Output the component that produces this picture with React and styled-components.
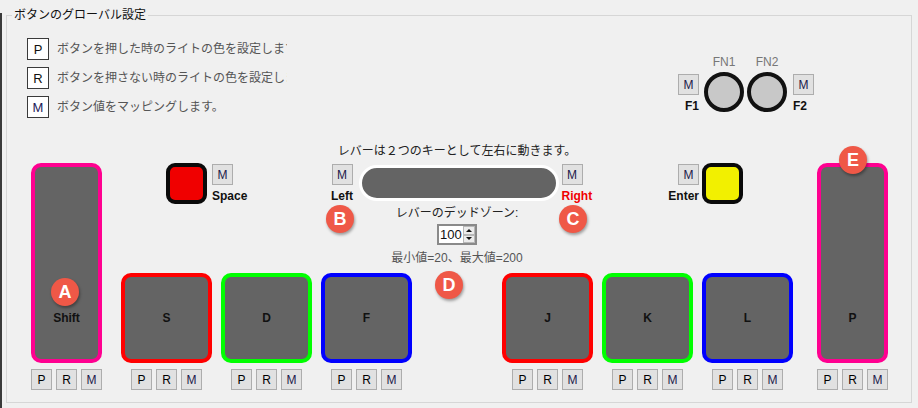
import styled, { createGlobalStyle } from 'styled-components';

const GlobalStyle = createGlobalStyle`
  body {
    margin: 0;
    background: #f0f0f0;
    font-family: 'Liberation Sans', 'Noto Sans CJK JP', sans-serif;
    font-size: 12px;
    color: #111;
  }
`;

const Page = styled.div`
  position: relative;
  height: 408px;
  box-sizing: border-box;
  padding: 7px 0 0 6px;
  overflow: hidden;

  &::before {
    content: '';
    position: absolute;
    left: 0;
    top: 13px;
    bottom: 0;
    width: 2px;
    background: #3a3a3a;
  }
`;

const Panel = styled.fieldset`
  margin: 0;
  padding: 0;
  min-width: 0;
  width: 906px;
  height: 396px;
  box-sizing: border-box;
  border: 1px solid #d6d6d6;
`;

const PanelTitle = styled.legend`
  margin-left: 5px;
  padding: 0 2px;
  font: 12px/16px 'Liberation Sans', 'Noto Sans CJK JP', sans-serif;
  color: #111;
`;

const TopRow = styled.div`
  display: flex;
  align-items: flex-start;
  height: 120px;
  padding-left: 20px;
`;

const InfoList = styled.div`
  display: flex;
  flex-direction: column;
  gap: 7px;
  padding-top: 15px;
`;

const InfoRow = styled.div`
  display: flex;
  align-items: center;
  gap: 8px;
`;

const InfoBox = styled.div`
  width: 22px;
  height: 22px;
  box-sizing: border-box;
  border: 1px solid #3a3a3a;
  background: #fff;
  display: flex;
  align-items: center;
  justify-content: center;
  font-size: 13px;
  color: ${({ $m }) => ($m ? '#1c1a5a' : '#111')};
`;

const InfoText = styled.div`
  width: 230px;
  overflow: hidden;
  white-space: nowrap;
  line-height: 16px;
  color: #555;
`;

const FnCluster = styled.div`
  display: flex;
  align-items: flex-start;
  margin: 32px 97px 0 auto;
`;

const SideCol = styled.div`
  width: 21px;
  display: flex;
  flex-direction: column;
  align-items: ${({ $align }) => $align || 'flex-start'};
  gap: 4px;
  margin-top: ${({ $top }) => $top || 0}px;
  margin-left: ${({ $ml }) => $ml || 0}px;
  margin-right: ${({ $mr }) => $mr || 0}px;
`;

const SideLabel = styled.div`
  font-weight: bold;
  line-height: 14px;
  white-space: nowrap;
  color: ${({ $color }) => $color || '#111'};
`;

const FnCol = styled.div`
  display: flex;
  flex-direction: column;
  align-items: center;
  gap: 3px;
  margin-right: ${({ $mr }) => $mr || 0}px;
`;

const FnLabel = styled.div`
  line-height: 14px;
  color: #777;
`;

const FnCircle = styled.div`
  width: 40px;
  height: 40px;
  box-sizing: border-box;
  border: 4px solid #111;
  border-radius: 50%;
  background: #c8c8c8;
`;

const SmallBtn = styled.div`
  width: 21px;
  height: 21px;
  box-sizing: border-box;
  border: 1px solid #adadad;
  background: #e1e1e1;
  display: flex;
  align-items: center;
  justify-content: center;
  font-size: 12px;
  color: ${({ $m }) => ($m ? '#1c1a4a' : '#000')};
`;

const Keyboard = styled.div`
  display: flex;
  align-items: flex-end;
  padding: 0 23px 0 24px;
`;

const Center = styled.div`
  flex: 1;
  display: flex;
  flex-direction: column;
  margin: 0 24px 0 19px;
`;

const MiddleRow = styled.div`
  display: grid;
  grid-template-columns: 1fr auto 1fr;
  align-items: start;
`;

const ColorGroup = styled.div`
  display: flex;
  align-items: flex-start;
  gap: ${({ $gap }) => $gap}px;
  margin-top: 20px;
  justify-self: ${({ $end }) => ($end ? 'end' : 'start')};
  margin-left: ${({ $ml }) => $ml || 0}px;
  margin-right: ${({ $mr }) => $mr || 0}px;
`;

const ColorSquare = styled.div`
  width: 41px;
  height: 41px;
  box-sizing: border-box;
  border: 4px solid #0a0a0a;
  border-radius: 9px;
  background: ${({ $color }) => $color};
`;

const LeverGroup = styled.div`
  display: flex;
  flex-direction: column;
  align-items: center;
`;

const Caption = styled.div`
  line-height: 16px;
  color: ${({ $color }) => $color || '#222'};
  white-space: nowrap;
  margin-top: ${({ $top }) => $top || 0}px;
`;

const LeverRow = styled.div`
  display: flex;
  align-items: flex-start;
  margin-top: 5px;
`;

const LeverBar = styled.div`
  width: 200px;
  height: 36px;
  box-sizing: border-box;
  margin-top: 1px;
  border: 3px solid #fff;
  border-radius: 18px;
  background: #646464;
`;

const Spinner = styled.div`
  width: 40px;
  height: 21px;
  box-sizing: border-box;
  margin-top: 3px;
  border: 2px solid #8a8a8a;
  background: #fff;
  display: flex;
  align-items: stretch;
`;

const SpinValue = styled.div`
  flex: 1;
  font-size: 13px;
  line-height: 17px;
  padding-left: 1px;
  color: #111;
`;

const SpinArrows = styled.div`
  width: 12px;
  display: flex;
  flex-direction: column;
`;

const SpinArrow = styled.div`
  flex: 1;
  border: 1px solid #b8b8b8;
  background: #ececec;
  display: flex;
  align-items: center;
  justify-content: center;

  &::after {
    content: '';
    border-left: 3px solid transparent;
    border-right: 3px solid transparent;
    ${({ $down }) => ($down ? 'border-top: 3px solid #111;' : 'border-bottom: 3px solid #111;')}
  }
`;

const KeyRow = styled.div`
  display: flex;
  justify-content: space-between;
  margin-top: 7px;
`;

const KeyGroup = styled.div`
  display: flex;
  gap: 9px;
`;

const KeyColumn = styled.div`
  display: flex;
  flex-direction: column;
  align-items: center;
  gap: 6px;
`;

const Key = styled.div`
  width: ${({ $w }) => $w}px;
  height: ${({ $h }) => $h}px;
  box-sizing: border-box;
  border: 4px solid ${({ $color }) => $color};
  border-radius: 10px;
  background: #646464;
  display: flex;
  align-items: flex-end;
  justify-content: center;
  padding-bottom: 34px;
  font-weight: bold;
  line-height: 14px;
  color: #111;
`;

const BtnRow = styled.div`
  display: flex;
  gap: 4px;
`;

const Badge = styled.div`
  position: absolute;
  left: ${({ $x }) => $x - 14}px;
  top: ${({ $y }) => $y - 14}px;
  width: 28px;
  height: 28px;
  border-radius: 50%;
  background: #ef5847;
  box-shadow: 1px 2px 3px rgba(0, 0, 0, 0.35);
  color: #fff;
  font: bold 18px/28px 'Liberation Sans', sans-serif;
  text-align: center;
`;

const info = [
  { k: 'P', t: 'ボタンを押した時のライトの色を設定します。' },
  { k: 'R', t: 'ボタンを押さない時のライトの色を設定します。' },
  { k: 'M', t: 'ボタン値をマッピングします。' },
];

const leftKeys = [
  { label: 'S', color: '#ff0000' },
  { label: 'D', color: '#00ff00' },
  { label: 'F', color: '#0000ff' },
];

const rightKeys = [
  { label: 'J', color: '#ff0000' },
  { label: 'K', color: '#00ff00' },
  { label: 'L', color: '#0000ff' },
];

const badges = [
  { l: 'A', x: 65, y: 292 },
  { l: 'B', x: 340, y: 219 },
  { l: 'C', x: 573, y: 219 },
  { l: 'D', x: 449, y: 285 },
  { l: 'E', x: 853, y: 160 },
];

const PRM = () => (
  <BtnRow>
    <SmallBtn>P</SmallBtn>
    <SmallBtn>R</SmallBtn>
    <SmallBtn $m>M</SmallBtn>
  </BtnRow>
);

const KeyUnit = ({ label, color, w = 91, h = 90 }) => (
  <KeyColumn>
    <Key $w={w} $h={h} $color={color}>{label}</Key>
    <PRM />
  </KeyColumn>
);

const App = () => {
  return (
    <Page>
      <GlobalStyle />
      <Panel>
        <PanelTitle>ボタンのグローバル設定</PanelTitle>
        <TopRow>
          <InfoList>
            {info.map((row) => (
              <InfoRow key={row.k}>
                <InfoBox $m={row.k === 'M'}>{row.k}</InfoBox>
                <InfoText>{row.t}</InfoText>
              </InfoRow>
            ))}
          </InfoList>
          <FnCluster>
            <SideCol $align="flex-end" $top={19} $mr={5}>
              <SmallBtn $m>M</SmallBtn>
              <SideLabel>F1</SideLabel>
            </SideCol>
            <FnCol $mr={3}>
              <FnLabel>FN1</FnLabel>
              <FnCircle />
            </FnCol>
            <FnCol $mr={6}>
              <FnLabel>FN2</FnLabel>
              <FnCircle />
            </FnCol>
            <SideCol $top={19}>
              <SmallBtn $m>M</SmallBtn>
              <SideLabel>F2</SideLabel>
            </SideCol>
          </FnCluster>
        </TopRow>

        <Keyboard>
          <KeyUnit label="Shift" color="#ff0090" w={71} h={200} />
          <Center>
            <MiddleRow>
              <ColorGroup $gap={5} $ml={45}>
                <ColorSquare $color="#f00000" />
                <SideCol $top={1}>
                  <SmallBtn $m>M</SmallBtn>
                  <SideLabel>Space</SideLabel>
                </SideCol>
              </ColorGroup>

              <LeverGroup>
                <Caption>レバーは２つのキーとして左右に動きます。</Caption>
                <LeverRow>
                  <SideCol $align="center" $mr={6}>
                    <SmallBtn $m>M</SmallBtn>
                    <SideLabel>Left</SideLabel>
                  </SideCol>
                  <LeverBar />
                  <SideCol $ml={3}>
                    <SmallBtn $m>M</SmallBtn>
                    <SideLabel $color="#f00000">Right</SideLabel>
                  </SideCol>
                </LeverRow>
                <Caption $top={2}>レバーのデッドゾーン:</Caption>
                <Spinner>
                  <SpinValue>100</SpinValue>
                  <SpinArrows>
                    <SpinArrow />
                    <SpinArrow $down />
                  </SpinArrows>
                </Spinner>
                <Caption $top={5} $color="#555">最小値=20、最大値=200</Caption>
              </LeverGroup>

              <ColorGroup $gap={3} $mr={50} $end>
                <SideCol $align="flex-end" $top={1}>
                  <SmallBtn $m>M</SmallBtn>
                  <SideLabel>Enter</SideLabel>
                </SideCol>
                <ColorSquare $color="#f2f000" />
              </ColorGroup>
            </MiddleRow>

            <KeyRow>
              <KeyGroup>
                {leftKeys.map((k) => (
                  <KeyUnit key={k.label} label={k.label} color={k.color} />
                ))}
              </KeyGroup>
              <KeyGroup>
                {rightKeys.map((k) => (
                  <KeyUnit key={k.label} label={k.label} color={k.color} />
                ))}
              </KeyGroup>
            </KeyRow>
          </Center>
          <KeyUnit label="P" color="#ff0090" w={71} h={200} />
        </Keyboard>
      </Panel>

      {badges.map((b) => (
        <Badge key={b.l} $x={b.x} $y={b.y}>
          {b.l}
        </Badge>
      ))}
    </Page>
  );
};

export default App;
